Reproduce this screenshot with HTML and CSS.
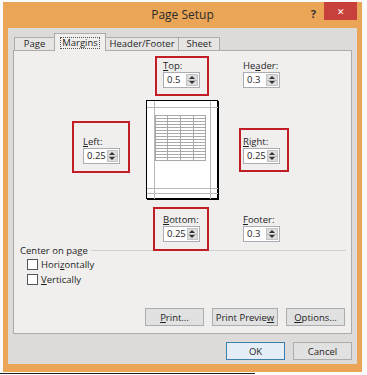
FILE: index.html
```html
<!DOCTYPE html>
<html lang="en">
<head>
  <meta charset="UTF-8">
  <title>Page Setup</title>
  <link rel="stylesheet" href="styles.css">
</head>
<body>
  <div class="window">
    <div class="titlebar">
      <span class="title">Page Setup</span>
      <span class="help">?</span>
      <span class="close">&#x2715;</span>
    </div>

    <div class="client">
      <div class="tabs">
        <div class="tab">Page</div>
        <div class="tab active"><span class="focus">Margins</span></div>
        <div class="tab">Header/Footer</div>
        <div class="tab">Sheet</div>
      </div>

      <div class="panel">
        <div class="margins">
          <div class="field hl hl-top">
            <label><u>T</u>op:</label>
            <div class="spin"><span class="spin-val">0.5</span><span class="spin-btns"><i class="up"></i><i class="down"></i></span></div>
          </div>
          <div class="field f-header">
            <label>He<u>a</u>der:</label>
            <div class="spin"><span class="spin-val">0.3</span><span class="spin-btns"><i class="up"></i><i class="down"></i></span></div>
          </div>

          <div class="field hl hl-left">
            <label><u>L</u>eft:</label>
            <div class="spin"><span class="spin-val">0.25</span><span class="spin-btns"><i class="up"></i><i class="down"></i></span></div>
          </div>
          <div class="preview">
            <svg width="73" height="100" viewBox="0 0 73 100">
              <rect x="0.5" y="0.5" width="71" height="98" fill="#fff" stroke="#000"/>
              <line x1="72.5" y1="1" x2="72.5" y2="100" stroke="#000"/>
              <line x1="1" y1="99.5" x2="73" y2="99.5" stroke="#000"/>
              <g stroke="#b8b8b8">
                <line x1="8.5" y1="1" x2="8.5" y2="99"/>
                <line x1="64.5" y1="1" x2="64.5" y2="99"/>
                <line x1="1" y1="7.5" x2="72" y2="7.5"/>
                <line x1="1" y1="88.5" x2="72" y2="88.5"/>
                <line x1="1" y1="93.5" x2="72" y2="93.5"/>
              </g>
              <g stroke="#a8a8a8">
                <line x1="9" y1="15.5" x2="60" y2="15.5"/>
                <line x1="9" y1="18.5" x2="60" y2="18.5"/>
                <line x1="9" y1="21.5" x2="60" y2="21.5"/>
                <line x1="9" y1="24.5" x2="60" y2="24.5"/>
                <line x1="9" y1="27.5" x2="60" y2="27.5"/>
                <line x1="9" y1="30.5" x2="60" y2="30.5"/>
                <line x1="9" y1="33.5" x2="60" y2="33.5"/>
                <line x1="9" y1="36.5" x2="60" y2="36.5"/>
                <line x1="9" y1="39.5" x2="60" y2="39.5"/>
                <line x1="9" y1="42.5" x2="60" y2="42.5"/>
                <line x1="9" y1="45.5" x2="60" y2="45.5"/>
                <line x1="9" y1="48.5" x2="60" y2="48.5"/>
                <line x1="9" y1="51.5" x2="60" y2="51.5"/>
                <line x1="9" y1="54.5" x2="60" y2="54.5"/>
                <line x1="9" y1="57.5" x2="60" y2="57.5"/>
                <line x1="9" y1="60.5" x2="60" y2="60.5"/>
                <line x1="9.5" y1="15" x2="9.5" y2="61"/>
                <line x1="21.5" y1="15" x2="21.5" y2="61"/>
                <line x1="34.5" y1="15" x2="34.5" y2="61"/>
                <line x1="47.5" y1="15" x2="47.5" y2="61"/>
                <line x1="59.5" y1="15" x2="59.5" y2="61"/>
              </g>
            </svg>
          </div>
          <div class="field hl hl-right">
            <label><u>R</u>ight:</label>
            <div class="spin"><span class="spin-val">0.25</span><span class="spin-btns"><i class="up"></i><i class="down"></i></span></div>
          </div>

          <div class="field hl hl-bottom">
            <label><u>B</u>ottom:</label>
            <div class="spin"><span class="spin-val">0.25</span><span class="spin-btns"><i class="up"></i><i class="down"></i></span></div>
          </div>
          <div class="field f-footer">
            <label><u>F</u>ooter:</label>
            <div class="spin"><span class="spin-val">0.3</span><span class="spin-btns"><i class="up"></i><i class="down"></i></span></div>
          </div>
        </div>

        <div class="center-group">
          <div class="group-head"><span>Center on page</span><span class="rule"></span></div>
          <div class="check"><span class="box"></span><span>Hori<u>z</u>ontally</span></div>
          <div class="check"><span class="box"></span><span><u>V</u>ertically</span></div>
        </div>

        <div class="panel-actions">
          <button class="btn b-print"><u>P</u>rint...</button>
          <button class="btn b-preview">Print Previe<u>w</u></button>
          <button class="btn b-options"><u>O</u>ptions...</button>
        </div>
      </div>

      <div class="dialog-actions">
        <button class="btn ok">OK</button>
        <button class="btn">Cancel</button>
      </div>
    </div>
  </div>
  <div class="sheet-edge"></div>
</body>
</html>
```

FILE: styles.css
```css
:root {
  --orange: #eaa556;
  --client: #dcdbd9;
  --panel: #f0efee;
  --line: #acacac;
  --red: #c21d24;
  --text: #1e1e1e;
}

* {
  box-sizing: border-box;
  margin: 0;
  padding: 0;
}

body {
  width: 367px;
  height: 375px;
  overflow: hidden;
  background: #fbfbfb;
  font-family: "Open Sans", "Noto Sans", sans-serif;
  font-size: 9.5px;
  color: var(--text);
}

.window {
  margin: 2px 5px 0 3px;
  background: var(--orange);
  padding: 0 5px 8px 5px;
}

/* title bar */
.titlebar {
  height: 26px;
  position: relative;
  display: flex;
  justify-content: center;
  align-items: center;
}

.title {
  font-size: 12px;
  color: #2c2c2c;
  margin-top: -2px;
}

.help {
  position: absolute;
  right: 41px;
  top: 4px;
  font-size: 11px;
  font-weight: bold;
  color: #333;
}

.close {
  position: absolute;
  right: 0;
  top: 0;
  width: 33px;
  height: 18px;
  background: #c8403c;
  color: #fff;
  font-size: 9px;
  display: flex;
  align-items: center;
  justify-content: center;
}

/* client */
.client {
  background: var(--client);
  padding: 5px 5px 4px 5px;
}

.tabs {
  display: flex;
  align-items: flex-end;
  height: 17px;
  padding-left: 1px;
  position: relative;
  z-index: 1;
}

.tab {
  height: 13px;
  padding: 0 6px;
  border: 1px solid var(--line);
  border-bottom: none;
  background: #e6e5e4;
  display: flex;
  align-items: center;
  margin-left: -1px;
  line-height: 1;
}

.tab:first-child {
  margin-left: 0;
  width: 41px;
  justify-content: center;
}

.tab.active {
  height: 18px;
  margin-bottom: -1px;
  background: var(--panel);
  width: 52px;
  padding: 0 3px;
  justify-content: center;
  align-items: flex-start;
  padding-top: 3px;
}

.focus {
  border: 1px dotted #555;
  padding: 0 1px;
  line-height: 10px;
}

.tab:nth-child(3) {
  width: 74px;
  justify-content: center;
}

.tab:nth-child(4) {
  width: 42px;
  justify-content: center;
}

.panel {
  background: var(--panel);
  border: 1px solid var(--line);
  height: 284px;
  display: flex;
  flex-direction: column;
}

/* margins grid */
.margins {
  display: grid;
  grid-template-columns: 132px 73px 1fr;
  grid-template-rows: 49px 100px 44px;
}

.field label {
  display: block;
  height: 13px;
  line-height: 13px;
}

.hl {
  border: 2px solid var(--red);
  position: relative;
  z-index: 2;
  align-self: start;
  justify-self: start;
}

.hl-top {
  grid-column: 2;
  grid-row: 1;
  margin: 5px 0 0 9px;
  padding: 1px 7px 6px 6px;
}

.f-header {
  grid-column: 3;
  grid-row: 1;
  margin: 8px 0 0 24px;
}

.hl-left {
  grid-column: 1;
  grid-row: 2;
  margin: 21px 0 0 58px;
  padding: 12px 8px 7px 9px;
}

.preview {
  grid-column: 2;
  grid-row: 2;
}

.preview svg {
  display: block;
}

.hl-right {
  grid-column: 3;
  grid-row: 2;
  margin: 28px 0 0 20px;
  padding: 5px 7px 6px 2px;
}

.hl-bottom {
  grid-column: 2;
  grid-row: 3;
  margin: 7px 0 0 7px;
  padding: 4px 7px 7px 8px;
}

.f-footer {
  grid-column: 3;
  grid-row: 3;
  margin: 13px 0 0 24px;
}

/* spinner */
.spin {
  width: 37px;
  height: 16px;
  border: 1px solid #abadb3;
  background: #fff;
  display: flex;
}

.spin-val {
  flex: 1;
  padding-left: 3px;
  line-height: 14px;
}

.spin-btns {
  width: 12px;
  margin: 1px;
  background: #dcdcdc;
  display: flex;
  flex-direction: column;
  border: 1px solid #c4c4c4;
}

.spin-btns i {
  flex: 1;
  display: flex;
  align-items: center;
  justify-content: center;
}

.spin-btns i.up {
  border-bottom: 1px solid #b8b8b8;
}

.spin-btns i::after {
  content: "";
  border-left: 3px solid transparent;
  border-right: 3px solid transparent;
}

.spin-btns i.up::after {
  border-bottom: 3px solid #333;
}

.spin-btns i.down::after {
  border-top: 3px solid #333;
}

/* center on page */
.center-group {
  padding: 0 5px 0 6px;
}

.group-head {
  display: flex;
  align-items: center;
  height: 13px;
  gap: 3px;
}

.rule {
  flex: 1;
  border-top: 1px solid #d0d0d0;
  margin-top: -1px;
}

.check {
  display: flex;
  align-items: center;
  height: 15px;
  padding-left: 7px;
  gap: 3px;
}

.check:first-of-type {
  margin-top: 3px;
}

.box {
  width: 11px;
  height: 11px;
  border: 1px solid #555;
  background: #fff;
}

/* buttons */
.panel-actions {
  margin-top: auto;
  display: flex;
  justify-content: flex-end;
  padding: 0 6px 7px 0;
  gap: 8px;
}

.btn {
  height: 18px;
  width: 59px;
  border: 1px solid var(--line);
  background: #e1e1e1;
  font-family: inherit;
  font-size: 9.5px;
  color: var(--text);
}

.b-preview {
  width: 66px;
}

.dialog-actions {
  display: flex;
  justify-content: flex-end;
  gap: 8px;
  margin-top: 8px;
}

.btn.ok {
  border-color: #3c7fb1;
  background: #e5eef6;
}

.sheet-edge {
  width: 255px;
  height: 1px;
  background: #222;
  margin-top: 1px;
}
```
